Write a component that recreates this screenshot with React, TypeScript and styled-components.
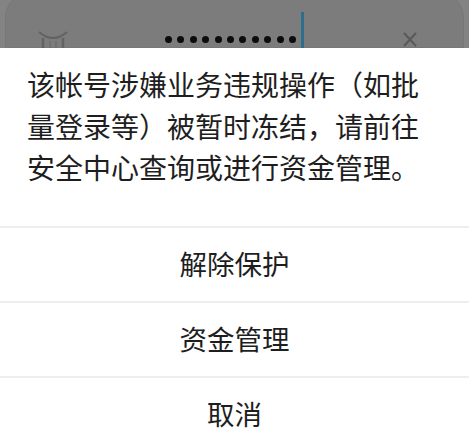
import React from "react";
import styled, { createGlobalStyle } from "styled-components";

const GlobalStyle = createGlobalStyle`
    html, body {
        margin: 0;
        padding: 0;
        background: #ffffff;
    }
    body {
        font-family: "Noto Sans CJK SC", "Noto Sans", sans-serif;
    }
`

const Page = styled.div`
    width: 469px;
    height: 445px;
    overflow: hidden;
    display: flex;
    flex-direction: column;
    background: #ffffff;
`

const Backdrop = styled.div`
    height: 48px;
    flex-shrink: 0;
    background: #838383;
    overflow: hidden;
    display: flex;
    flex-direction: column;
`

const Card = styled.div`
    flex: 1;
    margin: -8px 5px 0 5px;
    background: #7c7c7c;
    border-radius: 26px 26px 0 0;
    box-shadow: inset 0 0 0 1px rgba(0, 0, 0, 0.04);
    display: grid;
    grid-template-columns: 1fr auto 1fr;
    align-items: end;
`

const LeftSlot = styled.div`
    padding-left: 31px;
    display: flex;
    align-items: flex-end;
`

const RightSlot = styled.div`
    padding-right: 46px;
    display: flex;
    justify-content: flex-end;
    align-items: flex-end;
`

const Password = styled.div`
    display: flex;
    align-items: flex-end;
    gap: 5px;
`

const Dots = styled.div`
    display: flex;
    gap: 5.4px;
    padding-bottom: 5px;
`

const Dot = styled.span`
    width: 7px;
    height: 7px;
    border-radius: 50%;
    background: #0c0c0c;
`

const Cursor = styled.span`
    width: 3px;
    height: 36px;
    background: #2e6e8c;
`

const Sheet = styled.div`
    flex: 1;
    background: #ffffff;
    display: flex;
    flex-direction: column;
`

const Message = styled.p`
    margin: 0;
    padding: 16px 42px 37px 27px;
    font-size: 28px;
    line-height: 41.5px;
    color: #1e1e1e;
    font-weight: 400;
`

const Action = styled.div`
    box-sizing: border-box;
    height: 75px;
    flex-shrink: 0;
    border-top: 2px solid #eeeeee;
    display: flex;
    align-items: center;
    justify-content: center;
    padding-bottom: 3px;
    font-size: 27.5px;
    color: #1e1e1e;
`

const LockIcon = () => (
    <svg width="34" height="18" viewBox="0 0 34 18">
        <path d="M3 2 Q17 14 31 2" fill="none" stroke="#626262" strokeWidth="2" />
        <path d="M7 8 V18 M27 8 V18" stroke="#626262" strokeWidth="2.4" />
        <path d="M14 11 V18 M20 11 V18" stroke="#6c6c6c" strokeWidth="1.4" />
    </svg>
)

const CloseIcon = () => (
    <svg width="16" height="18" viewBox="0 0 16 18">
        <path d="M2 3 L14 16 M14 3 L2 16" stroke="#595959" strokeWidth="2" />
    </svg>
)

const actions = ["解除保护", "资金管理", "取消"];

const App = () => {
    return (
        <Page>
            <GlobalStyle />
            <Backdrop>
                <Card>
                    <LeftSlot>
                        <LockIcon />
                    </LeftSlot>
                    <Password>
                        <Dots>
                            {Array.from({ length: 11 }).map((_, i) => (
                                <Dot key={i} />
                            ))}
                        </Dots>
                        <Cursor />
                    </Password>
                    <RightSlot>
                        <CloseIcon />
                    </RightSlot>
                </Card>
            </Backdrop>
            <Sheet>
                <Message>
                    该帐号涉嫌业务违规操作（如批量登录等）被暂时冻结，请前往安全中心查询或进行资金管理。
                </Message>
                {actions.map(a => (
                    <Action key={a}>{a}</Action>
                ))}
            </Sheet>
        </Page>
    )
};

export default App;
